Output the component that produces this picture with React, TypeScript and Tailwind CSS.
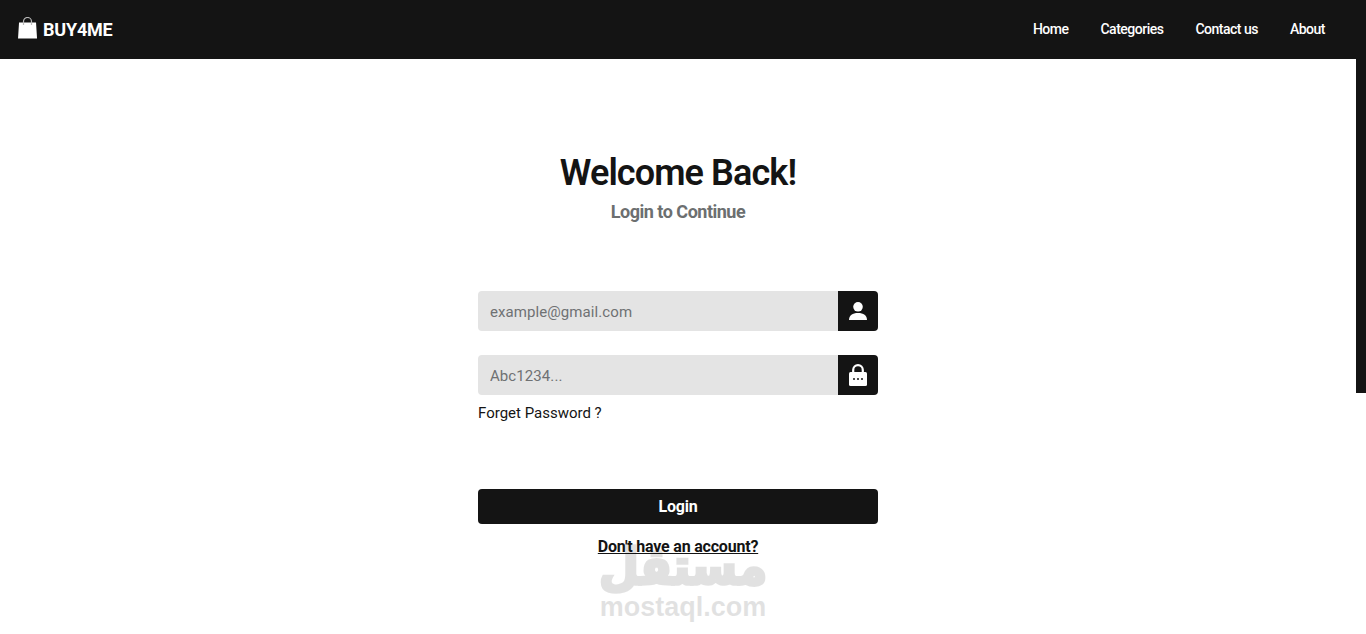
import type { ReactNode } from "react";

const navLinks = ["Home", "Categories", "Contact us", "About"];

function BagLogo() {
  return (
    <svg width="19" height="22" viewBox="0 0 19 22" className="-mt-[4px] shrink-0">
      <path d="M1 5.5h17l1 16H0z" fill="#fff" />
      <path d="M5.5 8V4.5a4 4 0 0 1 8 0V8" fill="none" stroke="#b9b9b9" strokeWidth="1.2" />
    </svg>
  );
}

function LockIcon() {
  return (
    <svg width="18" height="22" viewBox="0 0 18 22">
      <path d="M4.2 9V6a4.8 4.8 0 0 1 9.6 0v3" fill="none" stroke="#fff" strokeWidth="2.2" />
      <rect x="0" y="8" width="18" height="14" rx="1.5" fill="#fff" />
      <circle cx="5" cy="15" r="1" fill="#141414" />
      <circle cx="9" cy="15" r="1" fill="#141414" />
      <circle cx="13" cy="15" r="1" fill="#141414" />
    </svg>
  );
}

function UserIcon() {
  return (
    <svg width="18" height="18" viewBox="0 0 18 18">
      <circle cx="9" cy="4.8" r="4.8" fill="#fff" />
      <path d="M0 18c0-4.5 3.5-7 9-7s9 2.5 9 7z" fill="#fff" />
    </svg>
  );
}

function Field({ placeholder, icon }: { placeholder: string; icon: ReactNode }) {
  return (
    <div className="flex h-10 w-full">
      <input
        placeholder={placeholder}
        className="h-10 min-w-0 flex-1 rounded-l bg-[#e4e4e4] px-3 pt-[1px] text-[15px] tracking-[0.08px] text-[#141414] outline-none placeholder:text-[#6f7173]"
      />
      <div className="flex h-10 w-10 items-center justify-center rounded-r bg-[#141414]">{icon}</div>
    </div>
  );
}

export default function App() {
  return (
    <div className="relative h-[634px] overflow-hidden bg-white font-['Roboto','Noto_Sans',sans-serif] text-[#141414]">
      <header className="flex h-[59px] items-center justify-between bg-[#141414] pl-[18px] pr-[41px] text-white">
        <div className="flex items-center gap-[6px]">
          <BagLogo />
          <span className="text-[18px] font-bold tracking-[-0.2px]">BUY4ME</span>
        </div>
        <nav className="flex gap-[32px]">
          {navLinks.map((link) => (
            <a key={link} className="text-[14px] font-medium tracking-[-0.5px]">
              {link}
            </a>
          ))}
        </nav>
      </header>

      <div className="absolute right-0 top-[59px] h-[334px] w-[10px] bg-[#141414]" />

      <main className="mr-[10px] flex flex-col items-center">
        <h1 className="mt-[91px] text-[36px] font-semibold leading-[46px] tracking-[-0.9px]">Welcome Back!</h1>
        <p className="mt-[4px] text-[18px] font-bold leading-[24px] tracking-[-0.5px] text-[#6c6f70]">
          Login to Continue
        </p>

        <form className="mt-[67px] w-[400px]">
          <Field placeholder="example@gmail.com" icon={<UserIcon />} />
          <div className="mt-6">
            <Field placeholder="Abc1234..." icon={<LockIcon />} />
          </div>
          <a className="mt-[6px] block text-[15px] leading-[24px]">Forget Password ?</a>
          <button
            type="button"
            className="mt-[64px] h-[35px] w-full rounded bg-[#141414] pt-[1px] text-[16px] font-bold tracking-[-0.2px] text-white"
          >
            Login
          </button>
          <p className="mt-[11px] text-center text-[16px] font-bold leading-[24px] tracking-[-0.2px] underline">
            Don't have an account?
          </p>
        </form>
      </main>

      {/* watermark */}
      <div className="pointer-events-none absolute left-[600px] top-[540px] flex w-[166px] flex-col items-center text-[#141414] opacity-[0.12]">
        <span className="origin-bottom translate-y-[3px] scale-y-[1.1] font-['DejaVu_Sans',sans-serif] text-[46px] font-bold leading-[53px] [-webkit-text-stroke:3px_#141414]">
          مستقل
        </span>
        <span className="font-['Liberation_Sans',sans-serif] text-[27px] font-bold leading-[28px]">mostaql.com</span>
      </div>
    </div>
  );
}
